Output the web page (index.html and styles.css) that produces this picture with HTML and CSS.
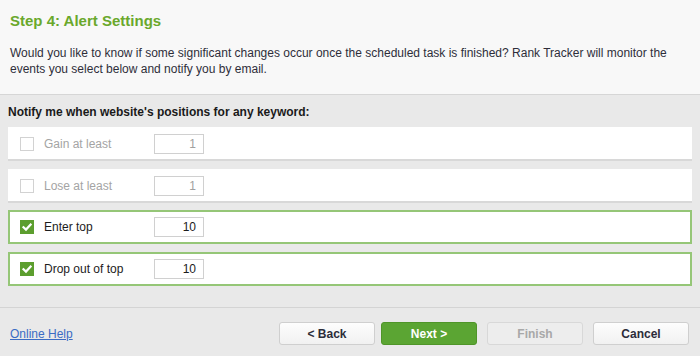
FILE: index.html
```html
<!DOCTYPE html>
<html>
<head>
<meta charset="utf-8">
<link rel="stylesheet" href="styles.css">
</head>
<body>
<div class="header">
  <h1 class="title">Step 4: Alert Settings</h1>
  <p class="intro">Would you like to know if some significant changes occur once the scheduled task is finished? Rank Tracker will monitor the events you select below and notify you by email.</p>
</div>
<div class="main">
  <div class="section-label">Notify me when website's positions for any keyword:</div>
  <div class="row disabled">
    <span class="check"></span>
    <span class="label">Gain at least</span>
    <span class="field">1</span>
  </div>
  <div class="row disabled">
    <span class="check"></span>
    <span class="label">Lose at least</span>
    <span class="field">1</span>
  </div>
  <div class="row checked">
    <span class="check"><svg width="14" height="14" viewBox="0 0 14 14"><path d="M3.5 7.2 L6 9.6 L10.6 4.6" fill="none" stroke="#fff" stroke-width="2.2" stroke-linecap="square"/></svg></span>
    <span class="label">Enter top</span>
    <span class="field">10</span>
  </div>
  <div class="row checked">
    <span class="check"><svg width="14" height="14" viewBox="0 0 14 14"><path d="M3.5 7.2 L6 9.6 L10.6 4.6" fill="none" stroke="#fff" stroke-width="2.2" stroke-linecap="square"/></svg></span>
    <span class="label">Drop out of top</span>
    <span class="field">10</span>
  </div>
</div>
<div class="footer">
  <a class="help" href="#">Online Help</a>
  <div class="buttons">
    <span class="btn back">&lt; Back</span>
    <span class="btn primary">Next &gt;</span>
    <span class="btn inactive">Finish</span>
    <span class="btn cancel">Cancel</span>
  </div>
</div>
</body>
</html>
```
FILE: styles.css
```css
html, body {
  margin: 0;
  padding: 0;
}
body {
  width: 700px;
  height: 356px;
  overflow: hidden;
  font-family: "Liberation Sans", Arial, sans-serif;
  font-size: 12px;
  color: #2b2b2b;
  background: #e9e9e9;
}
.header {
  height: 95px;
  box-sizing: border-box;
  background: #f8f8f8;
  border-bottom: 1px solid #d6d6d6;
  padding: 12px 10px 0 10px;
}
.title {
  margin: 0;
  font-size: 15px;
  font-weight: bold;
  color: #6aa82c;
  line-height: 18px;
}
.intro {
  margin: 15px 0 0 0;
  line-height: 16px;
  color: #2e2e3a;
}
.main {
  height: 213px;
  box-sizing: border-box;
  background: #e9e9e9;
  border-bottom: 1px solid #d4d4d4;
  padding: 10px 8px 0 8px;
}
.section-label {
  font-weight: bold;
  color: #1a1a1a;
  line-height: 14px;
  margin-bottom: 8px;
}
.row {
  display: flex;
  align-items: center;
  height: 34px;
  box-sizing: border-box;
  background: #fff;
  margin-bottom: 7.5px;
  padding-left: 12px;
}
.row.disabled {
  border-bottom: 2px solid #d8d8d8;
  padding-top: 2px;
}
.row.checked {
  border: 2px solid #95c677;
  padding-left: 10px;
}
.check {
  width: 14px;
  height: 14px;
  box-sizing: border-box;
  border: 1px solid #d2d2d2;
  background: #fff;
  display: flex;
}
.checked .check {
  border: none;
  background: #5c9e2e;
}
.label {
  margin-left: 10px;
  width: 110px;
  color: #1c1c1c;
}
.disabled .label {
  color: #a4a4a4;
}
.field {
  width: 50px;
  height: 20px;
  box-sizing: border-box;
  border: 1px solid #d0d0d0;
  background: #fff;
  text-align: right;
  padding-right: 7px;
  line-height: 18px;
  color: #1c1c1c;
}
.disabled .field {
  color: #a0a0a0;
}
.footer {
  height: 48px;
  display: flex;
  align-items: center;
  justify-content: space-between;
  padding: 3px 11px 0 10px;
  box-sizing: border-box;
  background: #e9e9e9;
}
.help {
  color: #3b6cc4;
  text-decoration: underline;
}
.buttons {
  display: flex;
  gap: 10px;
}
.btn {
  width: 96px;
  height: 23px;
  box-sizing: border-box;
  border: 1px solid #cfcfcf;
  border-radius: 3px;
  background: linear-gradient(#fdfdfd, #f1f1f1);
  display: flex;
  align-items: center;
  justify-content: center;
  font-weight: bold;
  color: #2c2c3a;
}
.btn.back {
  margin-right: -4px;
}
.btn.primary {
  background: #5ba533;
  border-color: #4f9529;
  color: #fff;
}
.btn.inactive {
  background: #ededed;
  border-color: #d8d8d8;
  color: #a8a8a8;
}
```
